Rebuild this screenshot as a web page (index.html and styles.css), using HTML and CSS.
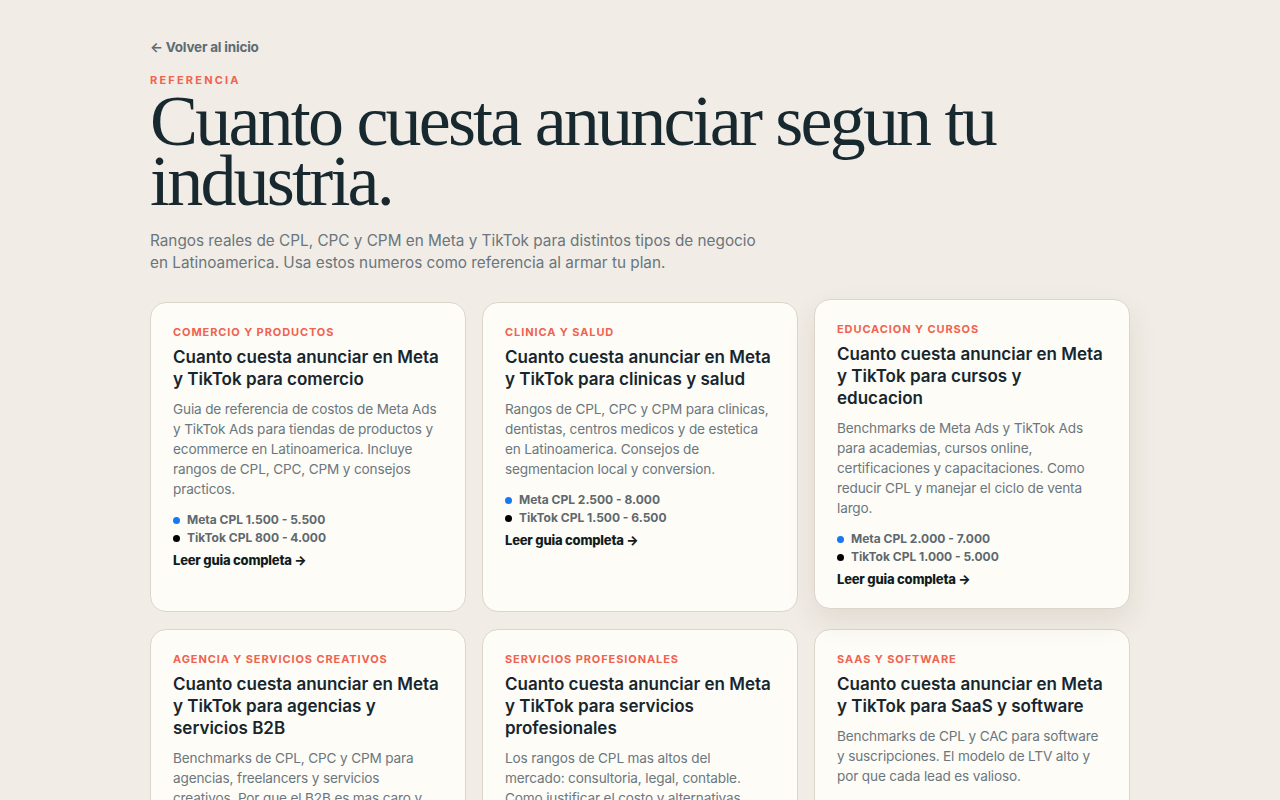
FILE: index.html
```html
<!DOCTYPE html>
<html lang="es">

<head>
    <meta charset="UTF-8">
    <meta name="viewport" content="width=device-width, initial-scale=1.0">
    <title>Cuanto cuesta anunciar segun tu industria</title>
    <link rel="stylesheet" href="styles.css">
</head>

<body>

    <div class="page">

        <!-- Intro -->
        <a class="back-link" href="#">&larr; Volver al inicio</a>
        <div class="eyebrow">Referencia</div>
        <h1 class="page-title">Cuanto cuesta anunciar segun tu industria.</h1>
        <p class="lead">Rangos reales de CPL, CPC y CPM en Meta y TikTok para distintos tipos de negocio en Latinoamerica. Usa estos numeros como referencia al armar tu plan.</p>

        <!-- Industry guides -->
        <div class="guide-grid">

            <a class="guide-card" href="#">
                <div class="guide-tag">Comercio y productos</div>
                <h2>Cuanto cuesta anunciar en Meta y TikTok para comercio</h2>
                <p class="guide-desc">Guia de referencia de costos de Meta Ads y TikTok Ads para tiendas de productos y ecommerce en Latinoamerica. Incluye rangos de CPL, CPC, CPM y consejos practicos.</p>
                <ul class="guide-stats">
                    <li><span class="dot meta"></span>Meta CPL 1.500 - 5.500</li>
                    <li><span class="dot tiktok"></span>TikTok CPL 800 - 4.000</li>
                </ul>
                <span class="read-more">Leer guia completa &rarr;</span>
            </a>

            <a class="guide-card" href="#">
                <div class="guide-tag">Clinica y salud</div>
                <h2>Cuanto cuesta anunciar en Meta y TikTok para clinicas y salud</h2>
                <p class="guide-desc">Rangos de CPL, CPC y CPM para clinicas, dentistas, centros medicos y de estetica en Latinoamerica. Consejos de segmentacion local y conversion.</p>
                <ul class="guide-stats">
                    <li><span class="dot meta"></span>Meta CPL 2.500 - 8.000</li>
                    <li><span class="dot tiktok"></span>TikTok CPL 1.500 - 6.500</li>
                </ul>
                <span class="read-more">Leer guia completa &rarr;</span>
            </a>

            <a class="guide-card raised" href="#">
                <div class="guide-tag">Educacion y cursos</div>
                <h2>Cuanto cuesta anunciar en Meta y TikTok para cursos y educacion</h2>
                <p class="guide-desc">Benchmarks de Meta Ads y TikTok Ads para academias, cursos online, certificaciones y capacitaciones. Como reducir CPL y manejar el ciclo de venta largo.</p>
                <ul class="guide-stats">
                    <li><span class="dot meta"></span>Meta CPL 2.000 - 7.000</li>
                    <li><span class="dot tiktok"></span>TikTok CPL 1.000 - 5.000</li>
                </ul>
                <span class="read-more">Leer guia completa &rarr;</span>
            </a>

            <a class="guide-card" href="#">
                <div class="guide-tag">Agencia y servicios creativos</div>
                <h2>Cuanto cuesta anunciar en Meta y TikTok para agencias y servicios B2B</h2>
                <p class="guide-desc">Benchmarks de CPL, CPC y CPM para agencias, freelancers y servicios creativos. Por que el B2B es mas caro y como compensarlo con mejores filtros.</p>
                <ul class="guide-stats">
                    <li><span class="dot meta"></span>Meta CPL 3.000 - 10.000</li>
                    <li><span class="dot tiktok"></span>TikTok CPL 2.000 - 8.000</li>
                </ul>
                <span class="read-more">Leer guia completa &rarr;</span>
            </a>

            <a class="guide-card" href="#">
                <div class="guide-tag">Servicios profesionales</div>
                <h2>Cuanto cuesta anunciar en Meta y TikTok para servicios profesionales</h2>
                <p class="guide-desc">Los rangos de CPL mas altos del mercado: consultoria, legal, contable. Como justificar el costo y alternativas para bajar el precio por lead.</p>
                <ul class="guide-stats">
                    <li><span class="dot meta"></span>Meta CPL 4.000 - 12.000</li>
                    <li><span class="dot tiktok"></span>TikTok CPL 3.000 - 9.000</li>
                </ul>
                <span class="read-more">Leer guia completa &rarr;</span>
            </a>

            <a class="guide-card" href="#">
                <div class="guide-tag">SaaS y software</div>
                <h2>Cuanto cuesta anunciar en Meta y TikTok para SaaS y software</h2>
                <p class="guide-desc">Benchmarks de CPL y CAC para software y suscripciones. El modelo de LTV alto y por que cada lead es valioso.</p>
                <ul class="guide-stats">
                    <li><span class="dot meta"></span>Meta CPL 3.500 - 11.000</li>
                    <li><span class="dot tiktok"></span>TikTok CPL 2.500 - 8.500</li>
                </ul>
                <span class="read-more">Leer guia completa &rarr;</span>
            </a>

        </div>
    </div>

</body>

</html>
```

FILE: styles.css
```css
* {
    margin: 0;
    padding: 0;
    box-sizing: border-box;
}

body {
    font-family: Inter, "Noto Sans", sans-serif;
    background-color: #f1ece5;
    color: #17262e;
}

.page {
    max-width: 980px;
    margin: 0 auto;
    padding: 36px 0 60px;
}

/* Intro */
.back-link {
    display: inline-block;
    font-size: 13.5px;
    font-weight: 700;
    color: #5d6b72;
    text-decoration: none;
    letter-spacing: -0.2px;
}

.eyebrow {
    margin-top: 17px;
    font-size: 11px;
    font-weight: 700;
    letter-spacing: 2.2px;
    text-transform: uppercase;
    color: #ef6350;
}

.page-title {
    margin-top: 4px;
    font-family: "Liberation Serif", "DejaVu Serif", serif;
    font-weight: 400;
    font-size: 72px;
    line-height: 60px;
    letter-spacing: -2.8px;
    color: #17282f;
    max-width: 880px;
}

.lead {
    margin-top: 19px;
    max-width: 620px;
    font-size: 15.3px;
    line-height: 22px;
    color: #69767d;
}

/* Guide cards */
.guide-grid {
    display: grid;
    grid-template-columns: repeat(3, 1fr);
    gap: 17px 16px;
    margin-top: 28px;
}

.guide-card {
    display: flex;
    flex-direction: column;
    align-items: flex-start;
    padding: 22px 25px 20px 22px;
    background-color: #fdfcf7;
    border: 1px solid #ddd5ca;
    border-radius: 16px;
    color: inherit;
    text-decoration: none;
    transition: transform 0.2s ease, box-shadow 0.2s ease;
}

.guide-card:hover,
.guide-card.raised {
    transform: translateY(-3px);
    box-shadow: 0 12px 30px rgba(60, 45, 25, 0.09);
}

.guide-tag {
    font-size: 11px;
    font-weight: 700;
    letter-spacing: 0.9px;
    text-transform: uppercase;
    color: #ef6350;
    line-height: 14px;
}

.guide-card h2 {
    margin-top: 7px;
    font-size: 17px;
    font-weight: 600;
    line-height: 22px;
    color: #17262e;
}

.guide-desc {
    margin-top: 9px;
    font-size: 13.6px;
    line-height: 20px;
    letter-spacing: -0.15px;
    color: #6b777e;
}

.guide-stats {
    list-style: none;
    margin-top: 12px;
}

.guide-stats li {
    display: flex;
    align-items: center;
    font-size: 12px;
    font-weight: 700;
    line-height: 18px;
    color: #5e686e;
}

.dot {
    width: 7px;
    height: 7px;
    border-radius: 50%;
    margin-right: 7px;
}

.dot.meta {
    background-color: #1877f2;
}

.dot.tiktok {
    background-color: #000000;
}

.read-more {
    margin-top: 4px;
    font-size: 13px;
    font-weight: 800;
    line-height: 18px;
    letter-spacing: -0.2px;
    color: #111c22;
}
```
